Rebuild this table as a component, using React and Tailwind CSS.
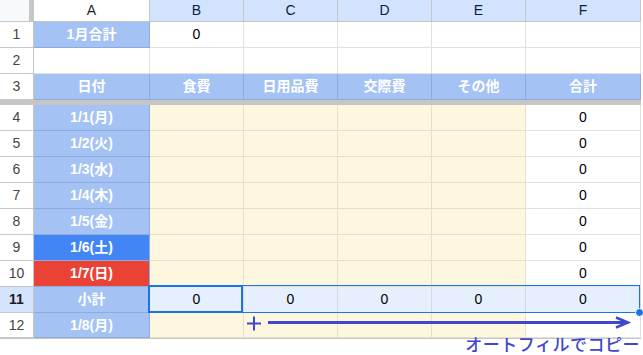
const font = { fontFamily: '"Liberation Sans", Arial, "Noto Sans CJK JP", sans-serif' };

const W = ['w-[34px]', 'w-[116px]', 'w-[94px]', 'w-[94px]', 'w-[94px]', 'w-[94px]', 'w-[115px]'];

function RowHead({ n, active }) {
  return (
    <div
      className={`${W[0]} h-full shrink-0 flex items-center justify-center border-r border-b border-[#c4c7c5] text-[14px] ${
        active ? 'bg-[#d3e3fd] font-bold text-[#1f1f1f]' : 'bg-white text-[#444]'
      }`}
    >
      {n}
    </div>
  );
}

function Blue({ children, tone = 'bg-[#a4c2f4]' }) {
  return (
    <div className={`${W[1]} h-full shrink-0 flex items-center justify-center ${tone} border-r border-b border-[#8faadc] text-white font-bold text-[14px]`}>
      {children}
    </div>
  );
}

function Yellow({ i }) {
  return <div className={`${W[i]} h-full shrink-0 bg-[#fef7e0] border-r border-b border-[#e6dfcb]`} />;
}

function Zero({ i, bg = 'bg-white', line = 'border-[#e1e1e1]' }) {
  return (
    <div className={`${W[i]} h-full shrink-0 flex items-center justify-center ${bg} border-r border-b ${line} text-[14px] text-black`}>
      0
    </div>
  );
}

const days = [
  ['4', '1/1(月)'],
  ['5', '1/2(火)'],
  ['6', '1/3(水)'],
  ['7', '1/4(木)'],
  ['8', '1/5(金)'],
];

export default function App() {
  return (
    <div className="w-[643px] h-[355px] bg-white overflow-hidden relative" style={font}>
      <div className="flex flex-col w-[641px]">
        {/* column letters */}
        <div className="flex h-[22px]">
          <div className={`${W[0]} h-full shrink-0 flex border-b border-[#c4c7c5]`}>
            <div className="w-[29px] bg-[#f8f9fa]" />
            <div className="w-[5px] bg-[#c6c6c6]" />
          </div>
          <div className={`${W[1]} h-full shrink-0 flex items-center justify-center bg-white border-r border-b border-[#c4c7c5] text-[14px] text-[#1f1f1f]`}>A</div>
          {['B', 'C', 'D', 'E'].map((c, k) => (
            <div key={c} className={`${W[k + 2]} h-full shrink-0 flex items-center justify-center bg-[#d3e3fd] border-r border-b border-[#c4c7c5] text-[14px] text-[#0b1f44]`}>
              {c}
            </div>
          ))}
          <div className={`${W[6]} h-full shrink-0 flex items-center justify-center bg-[#d3e3fd] border-r border-b border-[#c4c7c5] text-[14px] text-[#0b1f44]`}>F</div>
        </div>

        {/* row 1 */}
        <div className="flex h-[26px]">
          <RowHead n="1" />
          <Blue>1月合計</Blue>
          <Zero i={2} />
          {[3, 4, 5, 6].map((i) => (
            <div key={i} className={`${W[i]} h-full shrink-0 bg-white border-r border-b border-[#e1e1e1]`} />
          ))}
        </div>

        {/* row 2 */}
        <div className="flex h-[26px]">
          <RowHead n="2" />
          {[1, 2, 3, 4, 5, 6].map((i) => (
            <div key={i} className={`${W[i]} h-full shrink-0 bg-white border-r border-b border-[#e1e1e1]`} />
          ))}
        </div>

        {/* row 3 */}
        <div className="flex h-[26px]">
          <RowHead n="3" />
          <Blue>日付</Blue>
          {['食費', '日用品費', '交際費', 'その他'].map((t, k) => (
            <div key={t} className={`${W[k + 2]} h-full shrink-0 flex items-center justify-center bg-[#a4c2f4] border-r border-b border-[#8faadc] text-white font-bold text-[14px]`}>
              {t}
            </div>
          ))}
          <div className={`${W[6]} h-full shrink-0 flex items-center justify-center bg-[#a4c2f4] border-r border-b border-[#8faadc] text-white font-bold text-[14px]`}>合計</div>
        </div>

        {/* freeze bar */}
        <div className="h-[5px] bg-[#c6c6c6]" />

        {days.map(([n, d]) => (
          <div key={n} className="flex h-[26px]">
            <RowHead n={n} />
            <Blue>{d}</Blue>
            <Yellow i={2} />
            <Yellow i={3} />
            <Yellow i={4} />
            <Yellow i={5} />
            <Zero i={6} />
          </div>
        ))}

        <div className="flex h-[26px]">
          <RowHead n="9" />
          <Blue tone="bg-[#4285f4]">1/6(土)</Blue>
          <Yellow i={2} />
          <Yellow i={3} />
          <Yellow i={4} />
          <Yellow i={5} />
          <Zero i={6} />
        </div>

        <div className="flex h-[26px]">
          <RowHead n="10" />
          <Blue tone="bg-[#ea4335]">1/7(日)</Blue>
          <Yellow i={2} />
          <Yellow i={3} />
          <Yellow i={4} />
          <Yellow i={5} />
          <Zero i={6} />
        </div>

        <div className="flex h-[26px]">
          <RowHead n="11" active />
          <Blue>小計</Blue>
          {[2, 3, 4, 5, 6].map((i) => (
            <Zero key={i} i={i} bg="bg-[#e6effd]" line="border-[#d2d9e4]" />
          ))}
        </div>

        <div className="flex h-[26px] border-b border-[#c4c7c5]">
          <RowHead n="12" />
          <Blue>1/8(月)</Blue>
          <Yellow i={2} />
          <Yellow i={3} />
          <Yellow i={4} />
          <Yellow i={5} />
          <div className={`${W[6]} h-full shrink-0 bg-white border-r border-b border-[#e1e1e1]`} />
        </div>
      </div>

      {/* selection range C11:F11 */}
      <div className="absolute left-[148px] top-[285px] w-[492px] h-[28px] border border-[#1a73e8] pointer-events-none" />
      {/* active cell B11 */}
      <div className="absolute left-[148px] top-[285px] w-[95px] h-[28px] border-2 border-[#1a73e8] pointer-events-none" />
      {/* fill handle */}
      <div className="absolute left-[635px] top-[308px] w-[9px] h-[9px] rounded-full bg-[#1a73e8] border border-white" />

      {/* auto-fill arrow */}
      <svg className="absolute left-[244px] top-[314px]" width="392" height="18" viewBox="0 0 392 18">
        <path d="M3 9.5h14M10 2.5v14" stroke="#3f48cc" strokeWidth="2" fill="none" />
        <path d="M24 8.5h359" stroke="#3f48cc" strokeWidth="3" fill="none" />
        <path d="M372 3.5l12 5-12 5" stroke="#3f48cc" strokeWidth="2.5" fill="none" strokeLinejoin="miter" />
      </svg>
      <div
        className="absolute right-[3px] top-[335px] text-[17px] leading-[18px] font-medium text-[#3f48cc] tracking-[0.5px]"
        style={{ fontFamily: '"Noto Sans CJK JP", sans-serif' }}
      >
        オートフィルでコピー
      </div>
    </div>
  );
}
